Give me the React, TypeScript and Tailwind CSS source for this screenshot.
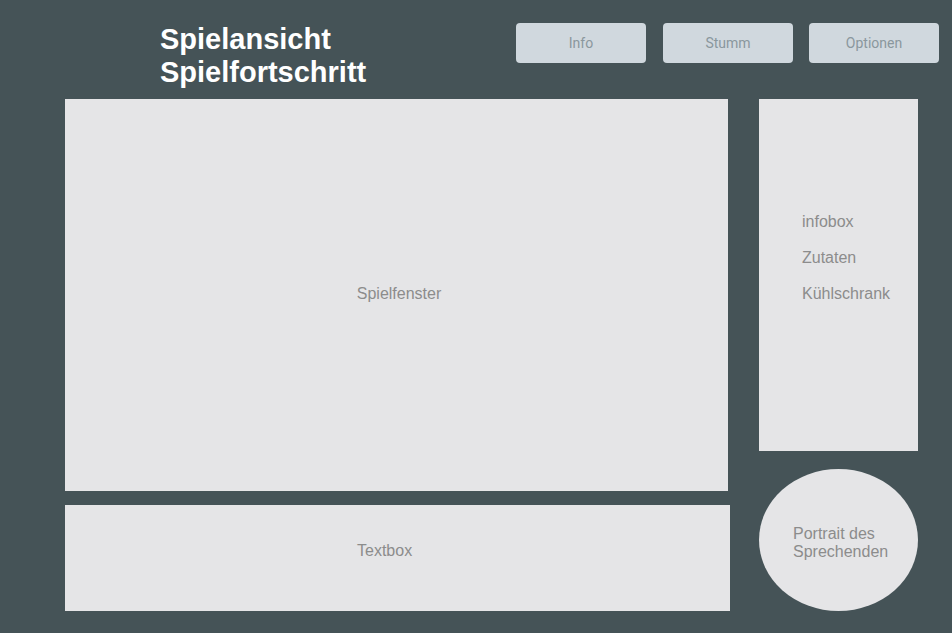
import React from "react";

export default function App() {
  const btn =
    "w-[130px] h-[40px] rounded-[4px] bg-[#d0d8de] text-[#8a979d] text-[14px] flex items-center justify-center";
  return (
    <div
      className="w-[952px] h-[633px] bg-[#455357] flex flex-col overflow-hidden"
      style={{ fontFamily: '"Liberation Sans", Arial, sans-serif' }}
    >
      <div className="h-[99px] flex items-start pl-[160px] pr-[13px] pt-[23px]">
        <h1 className="text-white font-bold text-[29px] leading-[33px] tracking-[0px]">
          Spielansicht
          <br />
          Spielfortschritt
        </h1>
        <div
          className="ml-auto flex"
          style={{ fontFamily: "Roboto, sans-serif" }}
        >
          <div className={btn}>Info</div>
          <div className={btn + " ml-[17px]"}>Stumm</div>
          <div className={btn + " ml-[16px]"}>Optionen</div>
        </div>
      </div>
      <div className="flex pl-[65px] text-[16px] text-[#8c8c8c]">
        <div className="flex flex-col gap-[14px]">
          <div className="w-[663px] h-[392px] bg-[#e5e5e7] flex items-center justify-center pl-[5px] pb-[2px]">
            Spielfenster
          </div>
          <div className="w-[665px] h-[106px] bg-[#e5e5e7] pl-[292px] pt-[37px] leading-[18px]">
            Textbox
          </div>
        </div>
        <div className="ml-[29px] flex flex-col gap-[18px]">
          <div className="w-[159px] h-[352px] bg-[#e5e5e7] flex flex-col gap-[18px] pl-[43px] pt-[114px] leading-[18px]">
            <span>infobox</span>
            <span>Zutaten</span>
            <span>Kühlschrank</span>
          </div>
          <div className="w-[159px] h-[142px] rounded-[50%] bg-[#e5e5e7] flex items-center pl-[34px] pt-[5px] leading-[18px]">
            <span>
              Portrait des
              <br />
              Sprechenden
            </span>
          </div>
        </div>
      </div>
    </div>
  );
}
